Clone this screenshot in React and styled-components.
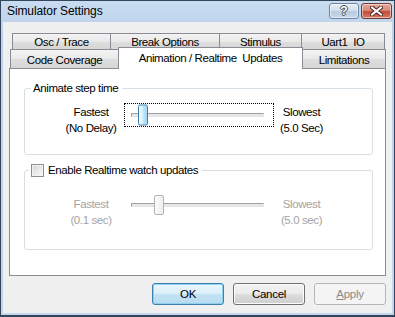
import React from 'react';
import styled, { createGlobalStyle } from 'styled-components';

const GlobalStyle = createGlobalStyle`
  html, body {
    margin: 0;
    padding: 0;
    background: #fff;
  }
  body {
    font-family: "Liberation Sans", Arial, sans-serif;
  }
`;

const Window = styled.div`
  width: 395px;
  height: 317px;
  box-sizing: border-box;
  display: flex;
  flex-direction: column;
  border: 1px solid #34465a;
  border-bottom-width: 2px;
  padding: 0 2px 2px 2px;
  background: linear-gradient(#c9dcf1, #bdd2eb 30px, #c3d6ed);
  overflow: hidden;
`;

const TitleBar = styled.div`
  height: 21px;
  flex: none;
  display: flex;
  align-items: flex-start;
  padding-left: 4px;
`;

const Title = styled.span`
  font-size: 12px;
  line-height: 21px;
  letter-spacing: -0.1px;
  color: #000;
`;

const CaptionButtons = styled.div`
  margin-left: auto;
  margin-top: 2px;
  display: flex;
  gap: 2px;
`;

const CaptionButton = styled.div`
  width: ${(p) => p.$w}px;
  height: 16px;
  box-sizing: border-box;
  border-radius: 3px;
  display: flex;
  align-items: center;
  justify-content: center;
  border: 1px solid ${(p) => (p.$close ? '#6e3b33' : '#6f86a3')};
  background: ${(p) =>
    p.$close
      ? 'linear-gradient(#e6a699 0%, #d98a7a 45%, #c44a36 55%, #d67a66 100%)'
      : 'linear-gradient(#e6eef7 0%, #d3e0ee 45%, #b9cbe0 55%, #c8d8ea 100%)'};
  box-shadow: inset 0 0 0 1px rgba(255, 255, 255, 0.5);
`;

const HelpGlyph = styled.span`
  font-size: 12px;
  font-weight: bold;
  line-height: 14px;
  color: #fff;
  text-shadow: 1px 0 0 #3c4a5c, -1px 0 0 #3c4a5c, 0 1px 0 #3c4a5c, 0 -1px 0 #3c4a5c;
`;

const Client = styled.div`
  flex: 1;
  background: #f0f0f0;
  display: flex;
  flex-direction: column;
  padding: 11px 6px 0 6px;
`;

const TabRow = styled.div`
  display: flex;
  padding-left: ${(p) => p.$inset}px;
`;

const Tab = styled.div`
  box-sizing: border-box;
  width: ${(p) => p.$w}px;
  height: ${(p) => p.$h}px;
  border: 1px solid #898c95;
  border-bottom: none;
  background: linear-gradient(#f3f3f3 0%, #e9e9e9 50%, #dedede 50%, #d6d6d6 100%);
  font-size: 11.5px;
  letter-spacing: -0.4px;
  line-height: ${(p) => p.$h + 1}px;
  text-align: center;
  white-space: pre;
  color: #000;
  & + & {
    margin-left: -1px;
  }
`;

const ActiveTab = styled(Tab)`
  background: #fff;
  margin-top: -2px;
  margin-bottom: -1px;
  line-height: 20px;
  position: relative;
  z-index: 1;
`;

const Panel = styled.div`
  height: 208px;
  box-sizing: border-box;
  border: 1px solid #898c95;
  background: #fff;
  padding: 13px 12px 0 14px;
  display: flex;
  flex-direction: column;
  gap: 9px;
`;

const Group = styled.fieldset`
  margin: 0;
  padding: ${(p) => p.$pad};
  border: 1px solid #d5dfe5;
  border-radius: 3px;
  min-inline-size: 0;
`;

const Legend = styled.legend`
  margin-left: ${(p) => p.$ml}px;
  padding: 0 4px 0 2px;
  font-size: 11.5px;
  letter-spacing: -0.4px;
  line-height: 13px;
  color: #000;
  display: flex;
  align-items: center;
  gap: 4px;
`;

const CheckBox = styled.span`
  width: 13px;
  height: 13px;
  box-sizing: border-box;
  border: 1px solid #8e8f8f;
  background: linear-gradient(135deg, #d7d7d7 0%, #ececec 60%, #fafafa 100%);
  box-shadow: inset 0 0 0 1px #f3f3f3;
`;

const SliderRow = styled.div`
  display: flex;
  align-items: flex-start;
  padding-left: 33px;
`;

const EndLabel = styled.div`
  width: ${(p) => p.$w}px;
  margin-top: ${(p) => p.$top}px;
  text-align: center;
  font-size: 11.5px;
  letter-spacing: -0.4px;
  line-height: 15.5px;
  color: ${(p) => (p.$disabled ? '#a3a3a3' : '#000')};
`;

const SliderBox = styled.div`
  position: relative;
  width: 150px;
  height: 24px;
  box-sizing: border-box;
  flex: none;
  display: flex;
  align-items: center;
  padding: 0 9px 0 6px;
  border: 1px dotted ${(p) => (p.$focused ? '#000' : 'transparent')};
`;

const Track = styled.div`
  flex: 1;
  height: 4px;
  box-sizing: border-box;
  border: 1px solid;
  border-color: #a0a0a0 #e3e3e3 #e3e3e3 #a0a0a0;
  background: #e7e7e7;
`;

const Thumb = styled.div`
  position: absolute;
  top: 50%;
  transform: translateY(-50%);
  width: 10px;
  height: ${(p) => (p.$disabled ? 20 : 21)}px;
  box-sizing: border-box;
  border-radius: 2px;
  border: 1px solid ${(p) => (p.$disabled ? '#b3b3b3' : '#3c7fb1')};
  background: ${(p) =>
    p.$disabled
      ? 'linear-gradient(to right, #fbfbfb, #eeeeee)'
      : 'linear-gradient(to right, #f2f9fe 0%, #d9f0fc 45%, #bee6fd 55%, #a2d6f3 100%)'};
`;

const ButtonRow = styled.div`
  display: flex;
  justify-content: flex-end;
  gap: 9px;
  margin-top: 7px;
`;

const Button = styled.div`
  width: 72px;
  height: 22px;
  box-sizing: border-box;
  border-radius: 3px;
  display: flex;
  align-items: center;
  justify-content: center;
  font-size: 11.5px;
  letter-spacing: -0.3px;
  border: 1px solid ${(p) => (p.$default ? '#3c7fb1' : p.$disabled ? '#b3b7ba' : '#707070')};
  color: ${(p) => (p.$disabled ? '#8a8a8a' : '#000')};
  background: ${(p) =>
    p.$disabled
      ? '#f4f4f4'
      : p.$default
      ? 'linear-gradient(#eaf6fd 0%, #dbeff9 50%, #c4e3f4 50%, #b7dbef 100%)'
      : 'linear-gradient(#f2f2f2 0%, #ebebeb 50%, #dddddd 50%, #cfcfcf 100%)'};
  box-shadow: ${(p) =>
    p.$default ? 'inset 0 0 0 1px #8fd0f0' : p.$disabled ? 'none' : 'inset 0 0 0 1px #fcfcfc'};
`;

const Slider = ({ value, max, focused, disabled }) => (
  <SliderBox $focused={focused}>
    <Track />
    <Thumb $disabled={disabled} style={{ left: 13 + (value / max) * 113 }} />
  </SliderBox>
);

const StepRow = ({ left, right, value, max, focused, disabled, top }) => (
  <SliderRow>
    <EndLabel $w={66} $top={top} $disabled={disabled}>
      {left[0]}
      <br />
      {left[1]}
    </EndLabel>
    <Slider value={value} max={max} focused={focused} disabled={disabled} />
    <EndLabel $w={55} $top={top} $disabled={disabled}>
      {right[0]}
      <br />
      {right[1]}
    </EndLabel>
  </SliderRow>
);

const App = () => {
  return (
    <>
      <GlobalStyle />
      <Window>
        <TitleBar>
          <Title>Simulator Settings</Title>
          <CaptionButtons>
            <CaptionButton $w={30}>
              <HelpGlyph>?</HelpGlyph>
            </CaptionButton>
            <CaptionButton $w={31} $close>
              <svg width="13" height="10" viewBox="0 0 13 10">
                <path d="M2 1.5 L11 8.5 M11 1.5 L2 8.5" stroke="#4a2620" strokeWidth="4" strokeLinecap="square" />
                <path d="M2 1.5 L11 8.5 M11 1.5 L2 8.5" stroke="#fff" strokeWidth="2" strokeLinecap="square" />
              </svg>
            </CaptionButton>
          </CaptionButtons>
        </TitleBar>

        <Client>
          <TabRow $inset={3}>
            <Tab $w={99} $h={16}>Osc / Trace</Tab>
            <Tab $w={110} $h={16}>Break Options</Tab>
            <Tab $w={83} $h={16}>Stimulus</Tab>
            <Tab $w={84} $h={16}>Uart1  IO</Tab>
          </TabRow>
          <TabRow $inset={1}>
            <Tab $w={109} $h={19}>Code Coverage</Tab>
            <ActiveTab $w={185} $h={22}>Animation / Realtime  Updates</ActiveTab>
            <Tab $w={84} $h={19}>Limitations</Tab>
          </TabRow>

          <Panel>
            <Group $pad="8px 0 18px 0">
              <Legend $ml={6}>Animate step time</Legend>
              <StepRow
                left={['Fastest', '(No Delay)']}
                right={['Slowest', '(5.0 Sec)']}
                value={0}
                max={50}
                top={2}
                focused
              />
            </Group>
            <Group $pad="16px 0 21px 0">
              <Legend $ml={4}>
                <CheckBox />
                Enable Realtime watch updates
              </Legend>
              <StepRow
                left={['Fastest', '(0.1 sec)']}
                right={['Slowest', '(5.0 sec)']}
                value={7}
                max={50}
                top={4}
                disabled
              />
            </Group>
          </Panel>

          <ButtonRow>
            <Button $default>OK</Button>
            <Button>Cancel</Button>
            <Button $disabled>
              <span>
                <u>A</u>pply
              </span>
            </Button>
          </ButtonRow>
        </Client>
      </Window>
    </>
  );
};

export default App;
